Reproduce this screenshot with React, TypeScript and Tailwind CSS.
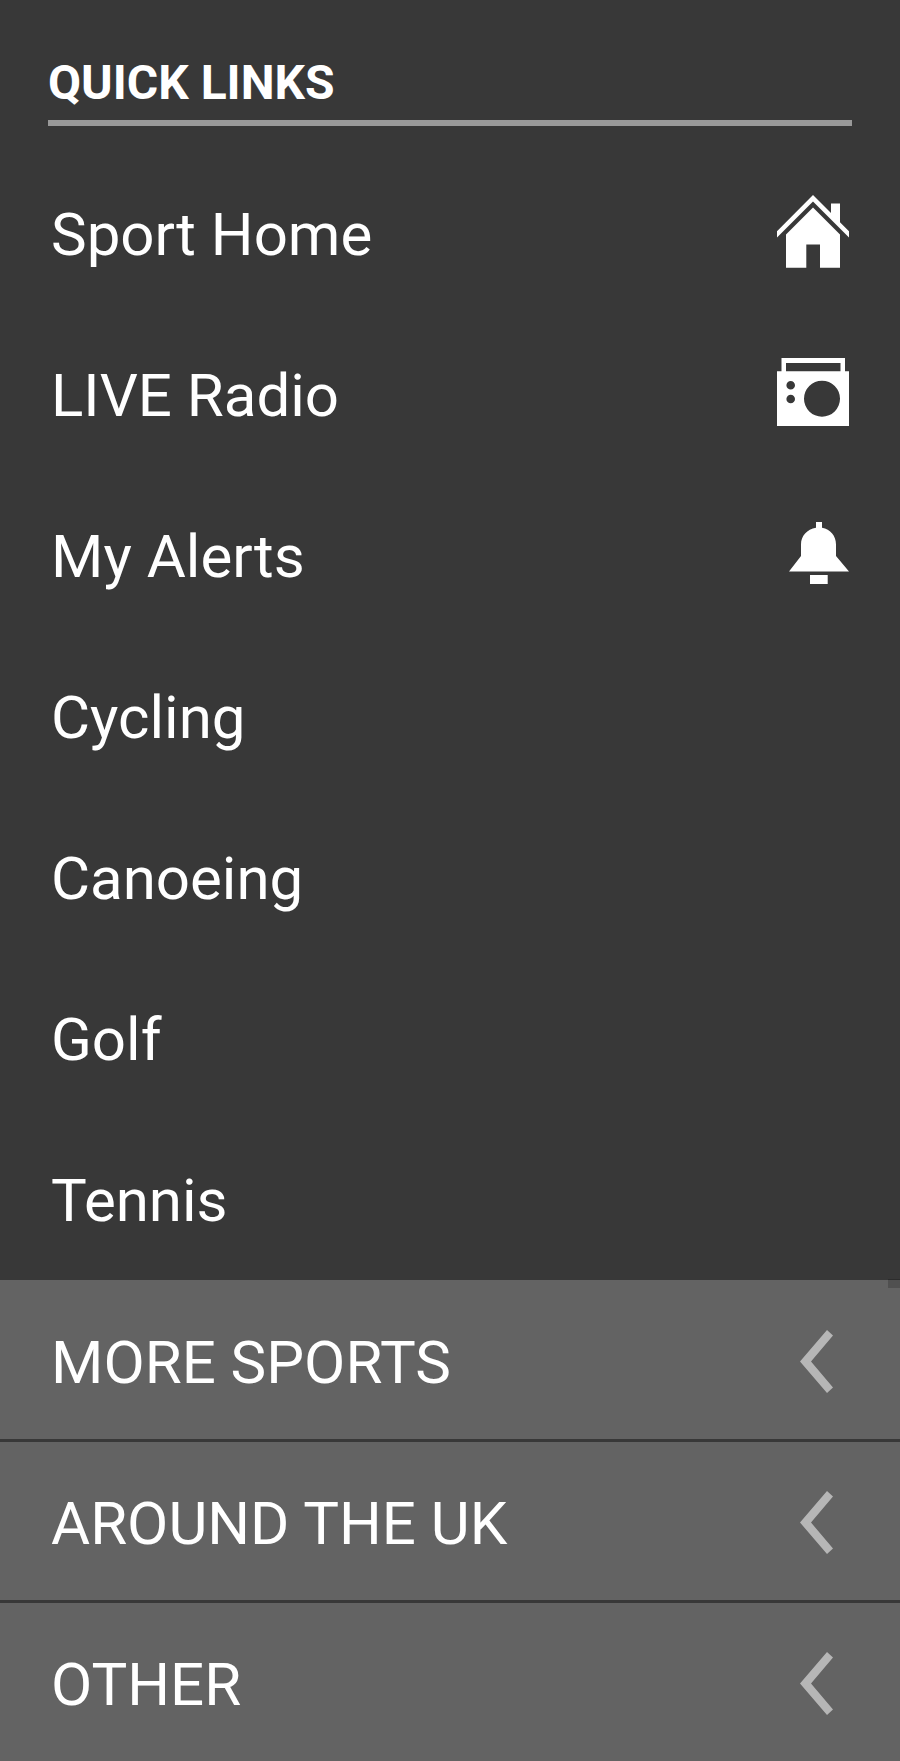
import type { ReactNode } from 'react';

const HomeIcon = () => (
  <svg viewBox="0 0 72 73" className="mb-[7px] h-[73px] w-[72px]" fill="white" aria-hidden="true">
    <path d="M36 0 54 18V8.500H63V27.300L72 36.300V42.500L36 6.500 0 42.500V36.300Z" />
    <path d="M36 12.500 63 39.500V72.700H43V49.500H29.300V72.700H9V39.500Z" />
  </svg>
);

const RadioIcon = () => (
  <svg viewBox="0 0 72 68" className="mb-[7px] h-[68px] w-[72px]" fill="white" aria-hidden="true">
    <path
      fillRule="evenodd"
      d="M4.500 0H68V13.300H72V68H0V13.300H4.500ZM9 5V13.300H63.500V5ZM45 22.700a18 18 0 1 0 0 36a18 18 0 1 0 0-36ZM13.700 23a4.300 4.300 0 1 0 0 8.600a4.300 4.300 0 1 0 0-8.600ZM13.700 36.700a4.300 4.300 0 1 0 0 8.600a4.300 4.300 0 1 0 0-8.600Z"
    />
  </svg>
);

const BellIcon = () => (
  <svg viewBox="0 0 60 62" className="mb-[7px] h-[62px] w-[60px]" fill="white" aria-hidden="true">
    <path d="M27 0H33V5.800C41.500 7.300 47 14 47 22.500V34L60 49.600H0L12 34V22.500C12 14 18 7.300 27 5.800ZM21 53H38.700V62H21Z" />
  </svg>
);

const Chevron = () => (
  <svg viewBox="0 0 33 63" className="mb-[3px] h-[63px] w-[33px]" fill="#b6b6b6" aria-hidden="true">
    <path d="M27 0 33 5.500 11 31.500 33 57.500 27 63 0 31.500Z" />
  </svg>
);

const links: { label: string; icon?: ReactNode }[] = [
  { label: 'Sport Home', icon: <HomeIcon /> },
  { label: 'LIVE Radio', icon: <RadioIcon /> },
  { label: 'My Alerts', icon: <BellIcon /> },
  { label: 'Cycling' },
  { label: 'Canoeing' },
  { label: 'Golf' },
  { label: 'Tennis' },
];

const sections = ['MORE SPORTS', 'AROUND THE UK', 'OTHER'];

export default function App() {
  return (
    <nav className="min-h-screen bg-[#383838] font-['Roboto',sans-serif] text-white">
      <header className="mx-12 border-b-6 border-[#999999] pt-[54px] pb-2">
        <h1 className="text-[48px] leading-[58px] font-bold">QUICK LINKS</h1>
      </header>
      <ul className="pt-[27px]">
        {links.map(({ label, icon }) => (
          <li key={label}>
            <a
              href="#"
              className="flex h-[161px] items-center justify-between pt-0.5 pr-[51px] pl-[51px] text-[60px] leading-[72px]"
            >
              {label}
              {icon}
            </a>
          </li>
        ))}
      </ul>
      <div className="relative border-t border-[#636363]">
        {sections.map((label) => (
          <button
            key={label}
            type="button"
            className="flex h-[161px] w-full items-center justify-between border-b-3 border-[#383838] bg-[#636363] pt-1.5 pr-[67px] pl-[51px] text-left text-[60px] leading-[72px] last:h-[158px] last:border-b-0"
          >
            {label}
            <Chevron />
          </button>
        ))}
        <span className="absolute -top-0.5 right-0 h-[9px] w-3 border-t border-[#2c2c2c] bg-[#505050]" />
      </div>
    </nav>
  );
}
